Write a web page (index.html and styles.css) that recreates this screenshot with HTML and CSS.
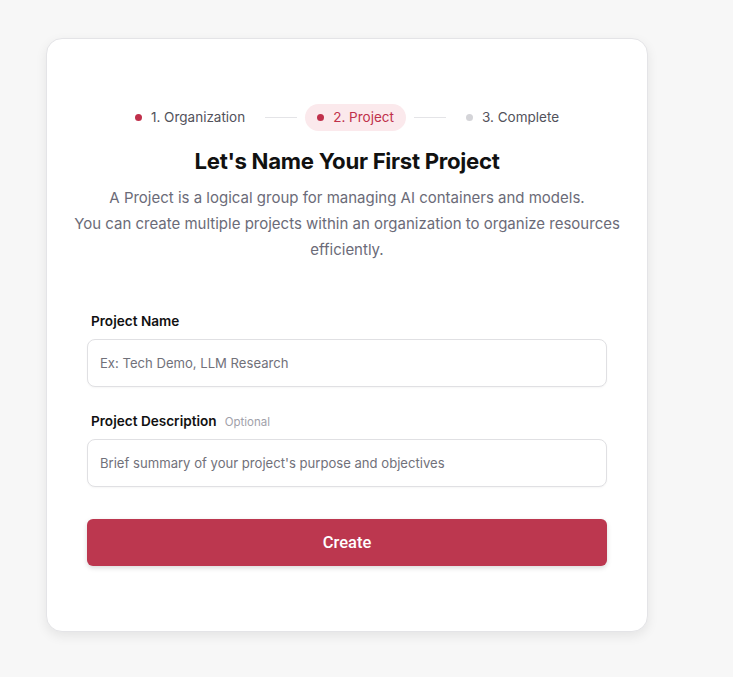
FILE: index.html
```html
<!DOCTYPE html>
<html lang="en">
<head>
<meta charset="utf-8">
<title>Create Project</title>
<link rel="stylesheet" href="styles.css">
</head>
<body>
<div class="page">
  <div class="card">
    <div class="steps">
      <div class="step done"><span class="dot"></span>1. Organization</div>
      <span class="line"></span>
      <div class="step active"><span class="dot"></span>2. Project</div>
      <span class="line"></span>
      <div class="step todo"><span class="dot"></span>3. Complete</div>
    </div>
    <h1 class="title">Let's Name Your First Project</h1>
    <p class="subtitle">A Project is a logical group for managing AI containers and models.<br>You can create multiple projects within an organization to organize resources efficiently.</p>
    <form class="form">
      <div class="field">
        <label class="label">Project Name</label>
        <input class="input" type="text" placeholder="Ex: Tech Demo, LLM Research">
      </div>
      <div class="field">
        <label class="label">Project Description <span class="optional">Optional</span></label>
        <input class="input" type="text" placeholder="Brief summary of your project's purpose and objectives">
      </div>
      <button class="btn" type="button">Create</button>
    </form>
  </div>
</div>
</body>
</html>
```

FILE: styles.css
```css
* { box-sizing: border-box; }
html, body { margin: 0; padding: 0; }
body {
  background: #f7f7f7;
  font-family: Inter, "Noto Sans", sans-serif;
  color: #111;
  width: 733px;
  height: 677px;
  overflow: hidden;
}
.page {
  padding: 38px 0 0 46px;
}
.card {
  width: 602px;
  height: 594px;
  background: #fff;
  border: 1px solid #e4e4e7;
  border-radius: 16px;
  box-shadow: 0 4px 12px rgba(0,0,0,0.08);
  padding: 64px 20px 0;
  display: flex;
  flex-direction: column;
  align-items: center;
}
.steps {
  display: flex;
  align-items: center;
  gap: 8px;
  height: 28px;
}
.step {
  display: flex;
  align-items: center;
  gap: 9px;
  font-size: 13.5px;
  color: #52525b;
  height: 27px;
  padding: 0 12px;
  border-radius: 14px;
}
.step .dot {
  width: 7px;
  height: 7px;
  border-radius: 50%;
  background: #c0304b;
}
.step.active {
  background: #fbe9ec;
  color: #c0304b;
}
.step.todo .dot { background: #d4d4d8; }
.line {
  width: 32px;
  height: 1px;
  background: #e4e4e7;
}
.title {
  margin: 15px 0 0;
  font-size: 22.2px;
  font-weight: 700;
  line-height: 30px;
  letter-spacing: -0.3px;
  color: #111;
}
.subtitle {
  margin: 9px 0 0;
  font-size: 15px;
  line-height: 26px;
  color: #6b6b78;
  text-align: center;
}
.form {
  width: 520px;
  margin-top: 48px;
  display: flex;
  flex-direction: column;
}
.field {
  display: flex;
  flex-direction: column;
  gap: 8px;
  margin-bottom: 24px;
}
.field + .field { margin-bottom: 32px; }
.label {
  display: flex;
  align-items: baseline;
  height: 20px;
  font-size: 13.6px;
  font-weight: 600;
  line-height: 20px;
  padding-left: 4px;
  color: #111;
}
.optional {
  font-size: 11.5px;
  font-weight: 400;
  line-height: 20px;
  color: #a1a1aa;
  margin-left: 8px;
}
.input {
  height: 48px;
  border: 1px solid #e0e0e3;
  border-radius: 8px;
  padding: 0 12px;
  font-family: Inter, sans-serif;
  font-size: 13.1px;
  color: #111;
  outline: none;
  box-shadow: 0 1px 2px rgba(0,0,0,0.04);
}
.input::placeholder { color: #71717a; }
.btn {
  height: 47px;
  border: none;
  border-radius: 6px;
  background: #bc374f;
  color: #fff;
  font-family: Roboto, sans-serif;
  font-size: 16.5px;
  font-weight: 500;
  box-shadow: 0 2px 5px rgba(0,0,0,0.15);
}
```
